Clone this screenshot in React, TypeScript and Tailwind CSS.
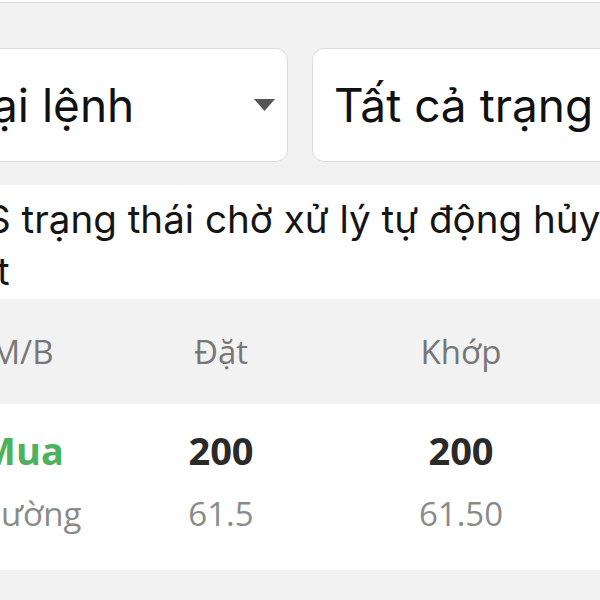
import React from "react";

const sf = { fontFamily: "Inter, 'Noto Sans', sans-serif" };
const os = { fontFamily: "'Open Sans', 'Noto Sans', sans-serif" };

function Caret() {
  return (
    <svg width="21" height="12" viewBox="0 0 21 12" className="shrink-0">
      <polygon points="0,0 21,0 10.5,12" fill="#555555" />
    </svg>
  );
}

export default function App() {
  return (
    <div className="w-[600px] h-[600px] overflow-hidden bg-white">
      <div className="ml-[-96px] w-[792px]">
        <div className="h-[2px] bg-white" />
        <div className="h-px bg-[#d6d6d6]" />
        <div className="bg-[#f2f2f2] px-[24px] pt-[45px] pb-[23px] flex gap-[24px]">
          <div className="w-[360px] h-[114px] shrink-0 bg-white border border-[#dcdcdc] rounded-[12px] flex items-center justify-between pl-[9px] pr-[12px] overflow-hidden">
            <span className="text-[46px] text-[#111111] whitespace-nowrap" style={sf}>Loại lệnh</span>
            <Caret />
          </div>
          <div className="w-[360px] h-[114px] shrink-0 bg-white border border-[#dcdcdc] rounded-[12px] flex items-center justify-between pl-[21px] pr-[12px] overflow-hidden">
            <span className="text-[46px] text-[#111111] whitespace-nowrap" style={sf}>Tất cả trạng thái</span>
          </div>
        </div>
        <div className="bg-white h-[114px] pt-[8px] overflow-hidden text-[38.6px] leading-[52px] text-[#151515]" style={sf}>
          <div className="whitespace-nowrap ml-[82px]">S trạng thái chờ xử lý tự động hủy</div>
          <div className="whitespace-nowrap ml-[93px]">t</div>
        </div>
        <div className="bg-[#f2f2f2] h-[105px] pl-[18px] grid grid-cols-[200px_198px_282px] items-center text-[33px] text-[#777777]" style={os}>
          <div className="text-center">M/B</div>
          <div className="text-center">Đặt</div>
          <div className="text-center">Khớp</div>
        </div>
        <div className="bg-white h-[166px] pt-[14px] pl-[18px] grid grid-cols-[200px_198px_282px] grid-rows-[64px_64px]" style={os}>
          <div className="text-center text-[38px] leading-[64px] font-bold text-[#4cb35c]">Mua</div>
          <div className="text-center text-[38px] leading-[64px] font-bold text-[#2a2a2a]">200</div>
          <div className="text-center text-[38px] leading-[64px] font-bold text-[#2a2a2a]">200</div>
          <div className="text-center text-[33px] leading-[64px] text-[#8a8a8a]">Thường</div>
          <div className="text-center text-[33px] leading-[64px] text-[#8a8a8a]">61.5</div>
          <div className="text-center text-[33px] leading-[64px] text-[#8a8a8a]">61.50</div>
        </div>
        <div className="bg-[#f2f2f2] h-[40px]" />
      </div>
    </div>
  );
}
